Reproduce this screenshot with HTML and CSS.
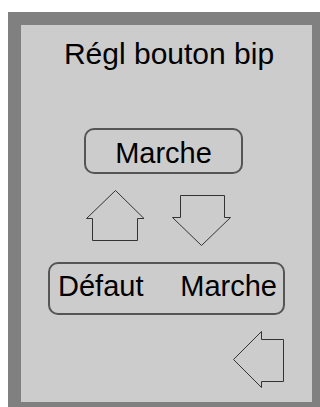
FILE: index.html
```html
<!DOCTYPE html>
<html>
<head>
<meta http-equiv="Content-Type" content="text/html; charset=utf-8"/>
<title>Régl bouton bip</title>
<link rel="stylesheet" href="styles.css">
</head>
<body>
<div class="frame">
  <div class="screen">
    <div class="title">Régl bouton bip</div>

    <div class="btn btn-state">Marche</div>

    <svg class="arrows" width="146" height="58" viewBox="0 0 146 58">
      <!-- up -->
      <polygon points="29.5,1.5 58,29.5 51.5,29.5 51.5,51.5 6.5,51.5 6.5,29.5 0.5,29.5"/>
      <!-- down -->
      <polygon points="94.5,6.5 138.5,6.5 138.5,28.5 144.5,28.5 115.5,56.5 86.5,28.5 94.5,28.5"/>
    </svg>

    <div class="btn btn-default">
      <span>Défaut</span>
      <span>Marche</span>
    </div>

    <svg class="back" width="52" height="60" viewBox="0 0 52 60">
      <polygon points="0.5,29.5 28.5,1.5 28.5,9.5 50.5,9.5 50.5,51.5 28.5,51.5 28.5,57.5"/>
    </svg>
  </div>
</div>
</body>
</html>
```

FILE: styles.css
```css
html, body {
  margin: 0;
  overflow: hidden;
  background-color: white;
}

body {
  font-family: "Liberation Sans", Arial, Helvetica, sans-serif;
  color: black;
}

/* frame is cut by the window on the right and bottom */
.frame {
  margin: 12px 0 0 8px;
  width: 291px;
  border: 13px solid #808080;
  border-right-width: 8px;
  border-bottom-width: 5px;
  background-color: #cccccc;
}

.screen {
  box-sizing: border-box;
  height: 377px;
  padding-top: 12px;
  display: flex;
  flex-direction: column;
  align-items: flex-start;
}

.title {
  align-self: stretch;
  padding-left: 5px;
  text-align: center;
  font-size: 30px;
  line-height: 34px;
}

.btn {
  box-sizing: border-box;
  border: 2px solid #555555;
  border-radius: 10px;
  font-size: 29px;
  line-height: 34px;
}

.btn-state {
  margin: 57px 0 0 63px;
  width: 159px;
  height: 46px;
  padding-top: 6px;
  text-align: center;
}

.arrows {
  display: block;
  margin: 15px 0 0 65px;
}

.arrows polygon, .back polygon {
  fill: none;
  stroke: #333333;
  stroke-width: 1;
}

.btn-default {
  margin: 15px 0 0 27px;
  width: 237px;
  height: 53px;
  padding: 5px 6px 0 8px;
  display: flex;
  justify-content: space-between;
}

.back {
  display: block;
  margin: 15px 0 0 212px;
}
```
